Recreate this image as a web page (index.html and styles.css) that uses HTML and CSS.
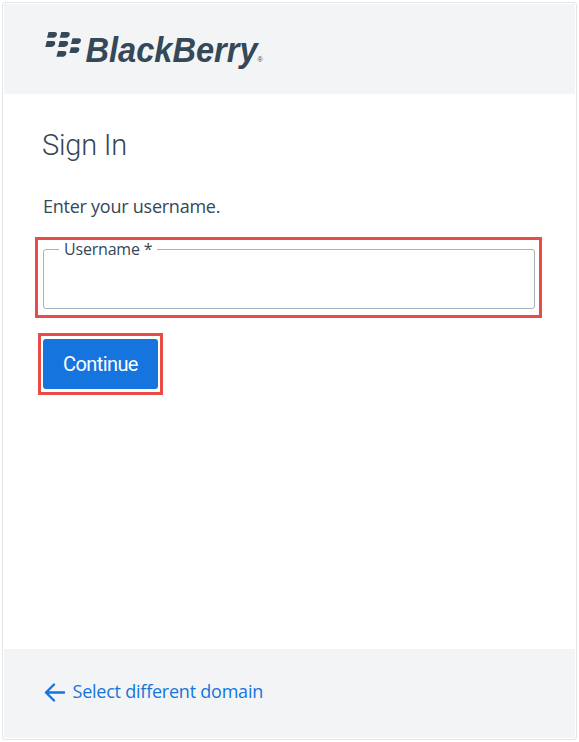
FILE: index.html
```html
<!DOCTYPE html>
<html lang="en">
<head>
<meta charset="utf-8">
<title>Sign In</title>
<link rel="stylesheet" href="styles.css">
</head>
<body>
<div class="card">
  <header class="header">
    <svg class="logo" width="222" height="48" viewBox="0 0 222 48" role="img" aria-label="BlackBerry">
      <defs>
        <path id="seed" d="M1.5 0H7.3C9.7 0 10.3 1.3 9.8 3C9.3 4.9 7.8 5.8 5.5 5.8H0Z"/>
      </defs>
      <g class="mark">
        <use href="#seed" x="2" y="4"/>
        <use href="#seed" x="14.8" y="4"/>
        <use href="#seed" x="0.3" y="13.1"/>
        <use href="#seed" x="13.2" y="13.1"/>
        <use href="#seed" x="26" y="10.2"/>
        <use href="#seed" x="24.4" y="19.2"/>
        <use href="#seed" x="11.4" y="22.9"/>
      </g>
      <text class="wordmark" x="40.5" y="33.7" textLength="172" lengthAdjust="spacingAndGlyphs">BlackBerry</text>
      <text class="registered" x="212.5" y="34">®</text>
    </svg>
  </header>
  <main class="content">
    <h1 class="title">Sign In</h1>
    <p class="prompt">Enter your username.</p>
    <div class="highlight highlight-field">
      <fieldset class="field">
        <legend class="label">Username *</legend>
        <input class="input" type="text" aria-label="Username">
      </fieldset>
    </div>
    <div class="highlight highlight-button">
      <button class="button" type="button">Continue</button>
    </div>
  </main>
  <footer class="footer">
    <a class="back">
      <svg class="arrow" width="22" height="20" viewBox="0 0 22 20"><path d="M20 10.5H2M10 2.5L2 10.5L10 18.5"/></svg>
      <span>Select different domain</span>
    </a>
  </footer>
</div>
</body>
</html>
```
FILE: styles.css
```css
* { box-sizing: border-box; }
body {
  margin: 0;
  padding: 2px;
  background: #fff;
  color: #344757;
  font-family: "Open Sans", sans-serif;
}
.card {
  width: 575px;
  height: 738px;
  border: 1px solid #e4e5e8;
  border-radius: 3px;
  padding: 1px;
  display: flex;
  flex-direction: column;
}
.header {
  height: 90px;
  flex: none;
  background: #f3f4f6;
  padding: 24px 0 0 41px;
}
.logo { display: block; overflow: visible; }
.mark, .wordmark, .registered { fill: #344857; }
.wordmark {
  font: italic bold 35px "Liberation Sans", sans-serif;
}
.registered { font: 7px "Liberation Sans", sans-serif; }
.content { flex: 1; padding: 30px 0 0 31px; }
.title {
  margin: 0 0 0 7px;
  font-family: Roboto, sans-serif;
  font-size: 29px;
  font-weight: 300;
  line-height: 43px;
  letter-spacing: -0.2px;
}
.prompt {
  margin: 26px 0 0 8px;
  font-size: 18px;
  line-height: 26px;
  letter-spacing: -0.25px;
}
.highlight { border: 3px solid #e94b46; }
.highlight-field {
  width: 507px;
  height: 81px;
  margin-top: 18px;
  padding: 0 4px 5px 5px;
}
.field {
  height: 69px;
  margin: 0;
  padding: 0 15px;
  min-width: 0;
  border: 1px solid #a9b1b8;
  border-radius: 3px;
}
.label {
  padding: 0 5px;
  font-size: 16px;
  line-height: 18px;
  letter-spacing: -0.2px;
}
.input {
  display: block;
  width: 100%;
  height: 45px;
  border: 0;
  outline: 0;
  background: transparent;
  font: inherit;
}
.highlight-button {
  width: 125px;
  height: 62px;
  margin: 15px 0 0 3px;
  padding: 3px 2px;
}
.button {
  display: block;
  width: 115px;
  height: 50px;
  padding: 0;
  border: 0;
  border-radius: 3px;
  background: #1574dd;
  color: #fff;
  font: 20px Roboto, sans-serif;
  letter-spacing: -0.6px;
}
.footer {
  height: 89px;
  flex: none;
  background: #f3f4f6;
  padding: 29px 0 0 40px;
}
.back {
  display: flex;
  align-items: center;
  gap: 6.5px;
  height: 26px;
  color: #1574dd;
  font-size: 18px;
  letter-spacing: -0.23px;
}
.arrow {
  position: relative;
  top: 1px;
  fill: none;
  stroke: #1574dd;
  stroke-width: 2.4;
  stroke-linecap: round;
  stroke-linejoin: round;
}
```
